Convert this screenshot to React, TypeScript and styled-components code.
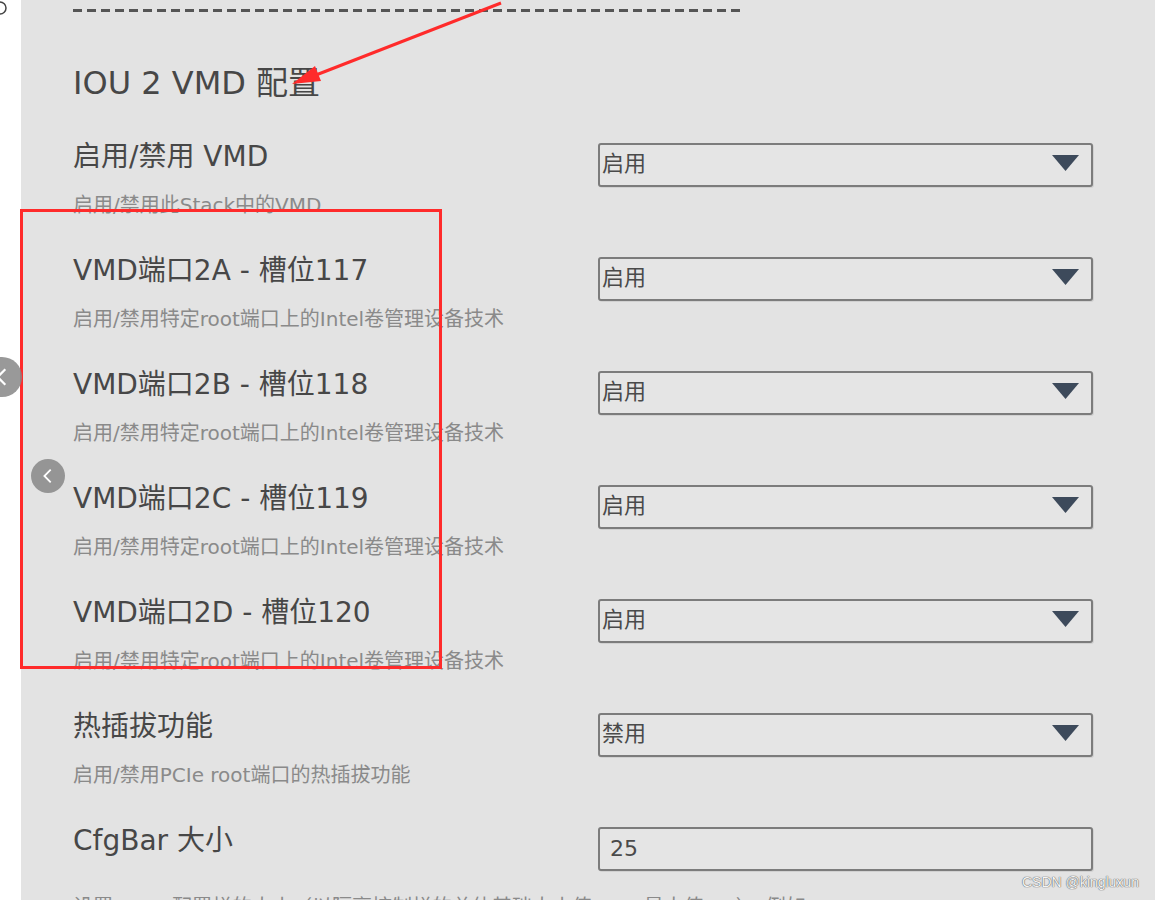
import React from 'react';
import styled, { createGlobalStyle } from 'styled-components';

const GlobalStyle = createGlobalStyle`
  html, body {
    margin: 0;
    padding: 0;
    background: #ffffff;
  }
  body {
    font-family: "DejaVu Sans", "Noto Sans CJK SC", sans-serif;
    overflow: hidden;
  }
`;

const Page = styled.div`
  position: relative;
  width: 1155px;
  height: 900px;
  overflow: hidden;
  background: #fff;
`;

const Panel = styled.div`
  margin-left: 21px;
  height: 900px;
  background: #e3e3e3;
  padding: 9px 0 0 52px;
  box-sizing: border-box;
  overflow: hidden;
`;

const Dashes = styled.div`
  width: 670px;
  height: 3px;
  background: repeating-linear-gradient(to right, #555 0 9px, transparent 9px 14px);
`;

const Title = styled.h1`
  margin: 51px 0 0;
  font-size: 32px;
  line-height: 40px;
  font-weight: normal;
  color: #474747;
  height: 74px;
`;

const Row = styled.div<{ $auto?: boolean }>`
  display: flex;
  height: ${(p) => (p.$auto ? 'auto' : '114px')};
`;

const Left = styled.div`
  flex: 0 0 525px;
  display: flex;
  flex-direction: column;
`;

const Heading = styled.div`
  padding-top: 2px;
  font-size: 28px;
  line-height: 36px;
  color: #474747;
  white-space: nowrap;
`;

const Desc = styled.div<{ $wide?: boolean }>`
  margin-top: ${(p) => (p.$wide ? '24px' : '18px')};
  font-size: 20px;
  line-height: 24px;
  color: #8a8a8a;
  white-space: nowrap;
`;

const Control = styled.div`
  margin-top: 6px;
  width: 495px;
  height: 44px;
  box-sizing: border-box;
  border: 2px solid #7c7c7c;
  border-radius: 3px;
  background: #e5e5e5;
  display: flex;
  align-items: center;
  justify-content: space-between;
  font-size: 22px;
  color: #4a4a4a;
  box-shadow: 1px 1px 0 rgba(0, 0, 0, 0.08);
`;

const SelectText = styled.span`
  padding: 0 0 8px 2px;
  font-family: "Noto Sans CJK SC", sans-serif;
`;

const InputText = styled.span`
  padding: 0 0 2px 10px;
`;

const Caret = styled.svg`
  width: 27px;
  height: 16px;
  margin: 0 12px 4px 0;
`;

const Overlay = styled.svg`
  position: absolute;
  left: 0;
  top: 0;
  pointer-events: none;
`;

const Highlight = styled.div`
  position: absolute;
  left: 20px;
  top: 209px;
  width: 422px;
  height: 460px;
  box-sizing: border-box;
  border: 3px solid #ff2b2b;
`;

const NavDot = styled.div<{ $x: number; $y: number; $r: number }>`
  position: absolute;
  left: ${(p) => p.$x - p.$r}px;
  top: ${(p) => p.$y - p.$r}px;
  width: ${(p) => p.$r * 2}px;
  height: ${(p) => p.$r * 2}px;
  border-radius: 50%;
  background: rgba(135, 135, 135, 0.85);
  display: flex;
  align-items: center;
  justify-content: center;
`;

const Watermark = styled.div`
  position: absolute;
  left: 1022px;
  top: 874px;
  font-family: "Liberation Sans", Arial, sans-serif;
  font-size: 14px;
  color: #f4f4f4;
  text-shadow: 0 0 1px #555, 0 0 1px #555;
  white-space: nowrap;
`;

const Dropdown: React.FC<{ value: string }> = ({ value }) => (
  <Control>
    <SelectText>{value}</SelectText>
    <Caret viewBox="0 0 27 16">
      <polygon points="0,0 27,0 13.5,16" fill="#3d4a5b" />
    </Caret>
  </Control>
);

const Chevron: React.FC<{ size: number }> = ({ size }) => (
  <svg width={size} height={size} viewBox="0 0 10 10">
    <polyline points="6.5,1.5 3,5 6.5,8.5" fill="none" stroke="#fff" strokeWidth="1" />
  </svg>
);

const items = [
  { title: '启用/禁用 VMD', desc: '启用/禁用此Stack中的VMD', value: '启用' },
  { title: 'VMD端口2A - 槽位117', desc: '启用/禁用特定root端口上的Intel卷管理设备技术', value: '启用' },
  { title: 'VMD端口2B - 槽位118', desc: '启用/禁用特定root端口上的Intel卷管理设备技术', value: '启用' },
  { title: 'VMD端口2C - 槽位119', desc: '启用/禁用特定root端口上的Intel卷管理设备技术', value: '启用' },
  { title: 'VMD端口2D - 槽位120', desc: '启用/禁用特定root端口上的Intel卷管理设备技术', value: '启用' },
  { title: '热插拔功能', desc: '启用/禁用PCIe root端口的热插拔功能', value: '禁用' },
];

export default function App() {
  return (
    <Page>
      <GlobalStyle />
      <Panel>
        <Dashes />
        <Title>IOU 2 VMD 配置</Title>
        {items.map((it) => (
          <Row key={it.title}>
            <Left>
              <Heading>{it.title}</Heading>
              <Desc>{it.desc}</Desc>
            </Left>
            <Dropdown value={it.value} />
          </Row>
        ))}
        <Row $auto>
          <Left>
            <Heading>CfgBar 大小</Heading>
          </Left>
          <Control>
            <InputText>25</InputText>
          </Control>
        </Row>
        <Desc $wide>设置 VMD 配置栏的大小（以隔离控制栏的总体基础大小值 25，最大值 27）。例如：25 = 32MB，27 = 128MB</Desc>
      </Panel>

      <Highlight />
      <Overlay width="1155" height="900" viewBox="0 0 1155 900">
        <line x1="501" y1="3" x2="316" y2="75" stroke="#ff2b2b" strokeWidth="3" />
        <polygon points="292,84 321,81 315,66" fill="#ff2b2b" />
        <path d="M0,2 A6,6 0 0 1 0,14" fill="none" stroke="#444" strokeWidth="1.5" />
      </Overlay>
      <NavDot $x={2} $y={377} $r={20}>
        <Chevron size={22} />
      </NavDot>
      <NavDot $x={48} $y={476} $r={17}>
        <Chevron size={18} />
      </NavDot>
      <Watermark>CSDN @kingluxun</Watermark>
    </Page>
  );
}
